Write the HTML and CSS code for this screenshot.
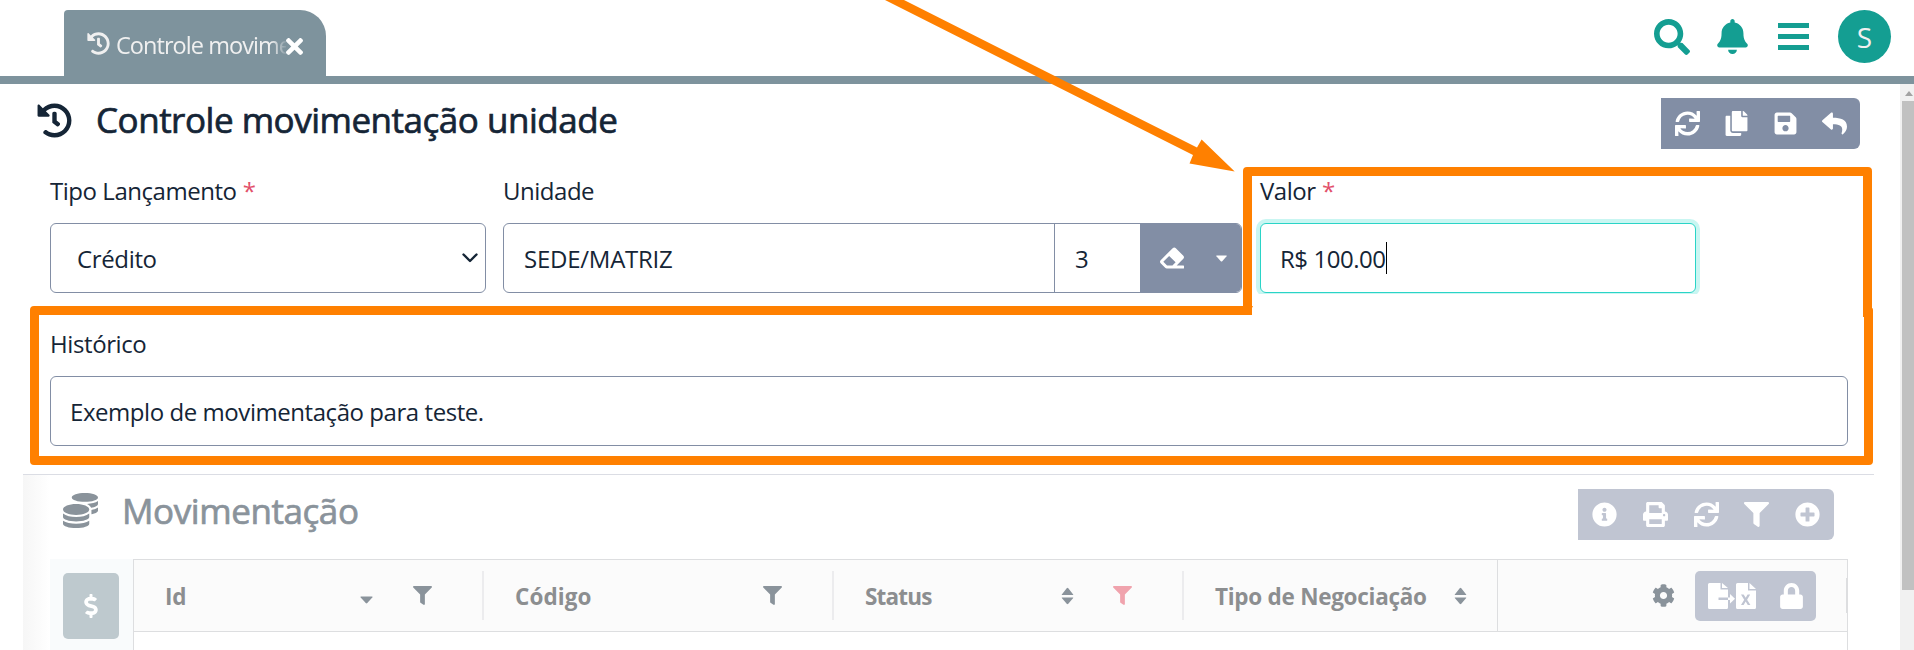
FILE: index.html
```html
<!DOCTYPE html>
<html lang="pt-BR">
<head>
<meta charset="utf-8">
<title>Controle movimentação unidade</title>
<link rel="stylesheet" href="styles.css">
</head>
<body>
<svg class="defs" width="0" height="0">
  <symbol id="history" viewBox="0 0 512 512"><path d="M504 255.531c.253 136.64-111.18 248.372-247.82 248.468-59.015.042-113.223-20.53-155.822-54.911-11.077-8.94-11.905-25.541-1.839-35.607l11.267-11.267c8.609-8.609 22.353-9.551 31.891-1.984C173.062 425.135 212.781 440 256 440c101.705 0 184-82.311 184-184 0-101.705-82.311-184-184-184-48.814 0-93.149 18.969-126.068 49.932l50.754 50.754c10.08 10.08 2.941 27.314-11.313 27.314H24c-8.837 0-16-7.163-16-16V38.627c0-14.254 17.234-21.393 27.314-11.314l49.372 49.372C129.209 34.136 189.552 8 256 8c136.81 0 247.747 110.78 248 247.531zm-180.912 78.784l9.823-12.63c8.138-10.463 6.253-25.542-4.21-33.679L288 256.349V152c0-13.255-10.745-24-24-24h-16c-13.255 0-24 10.745-24 24v135.651l65.409 50.874c10.463 8.137 25.541 6.253 33.679-4.21z"/></symbol>
  <symbol id="times" viewBox="0 80 352 352"><path d="M242.72 256l100.07-100.07c12.28-12.28 12.28-32.19 0-44.48l-22.24-22.24c-12.28-12.28-32.19-12.28-44.48 0L176 189.28 75.93 89.21c-12.28-12.28-32.19-12.28-44.48 0L9.21 111.45c-12.28 12.28-12.28 32.19 0 44.48L109.28 256 9.21 356.07c-12.28 12.28-12.28 32.19 0 44.48l22.24 22.24c12.28 12.28 32.2 12.28 44.48 0L176 322.72l100.07 100.07c12.28 12.28 32.2 12.28 44.48 0l22.24-22.24c12.28-12.28 12.28-32.19 0-44.48L242.72 256z"/></symbol>
  <symbol id="search" viewBox="0 0 512 512"><path d="M505 442.7L405.3 343c-4.5-4.5-10.6-7-17-7H372c27.6-35.3 44-79.7 44-128C416 93.1 322.9 0 208 0S0 93.1 0 208s93.1 208 208 208c48.3 0 92.7-16.4 128-44v16.3c0 6.4 2.5 12.5 7 17l99.7 99.7c9.4 9.4 24.6 9.4 33.9 0l28.3-28.3c9.4-9.4 9.4-24.6.1-34zM208 336c-70.7 0-128-57.2-128-128 0-70.7 57.2-128 128-128 70.7 0 128 57.2 128 128 0 70.7-57.2 128-128 128z"/></symbol>
  <symbol id="bell" viewBox="0 0 448 512"><path d="M224 512c35.32 0 63.97-28.65 63.97-64H160.03c0 35.35 28.65 64 63.97 64zm215.39-149.71c-19.32-20.76-55.47-51.99-55.47-154.29 0-77.7-54.48-139.9-127.94-155.16V32c0-17.67-14.32-32-31.98-32s-31.98 14.33-31.98 32v20.84C118.56 68.1 64.08 130.3 64.08 208c0 102.3-36.15 133.53-55.47 154.29-6 6.45-8.66 14.16-8.61 21.71.11 16.4 12.98 32 32.1 32h383.8c19.12 0 32-15.6 32.1-32 .05-7.55-2.61-15.27-8.61-21.71z"/></symbol>
  <symbol id="bars" viewBox="0 0 31 27"><path d="M0 0h31v5H0zM0 11h31v5H0zM0 22h31v5H0z"/></symbol>
  <symbol id="sync" viewBox="0 0 512 512"><path d="M440.65 12.57l4 82.77A247.16 247.16 0 0 0 255.83 8C134.73 8 33.91 94.92 12.29 209.82A12 12 0 0 0 24.09 224h49.05a12 12 0 0 0 11.67-9.26 175.91 175.91 0 0 1 317-56.94l-101.46-4.86a12 12 0 0 0-12.57 12v47.41a12 12 0 0 0 12 12H500a12 12 0 0 0 12-12V12a12 12 0 0 0-12-12h-47.37a12 12 0 0 0-11.98 12.57zM255.83 432a175.61 175.61 0 0 1-146-77.8l101.8 4.87a12 12 0 0 0 12.57-12v-47.4a12 12 0 0 0-12-12H12a12 12 0 0 0-12 12V500a12 12 0 0 0 12 12h47.35a12 12 0 0 0 12-12.6l-4.15-82.57A247.17 247.17 0 0 0 255.83 504c121.11 0 221.93-86.92 243.55-201.82a12 12 0 0 0-11.8-14.18h-49.05a12 12 0 0 0-11.67 9.26A175.86 175.86 0 0 1 255.83 432z"/></symbol>
  <symbol id="copy" viewBox="0 0 448 512"><path d="M320 448v40c0 13.255-10.745 24-24 24H24c-13.255 0-24-10.745-24-24V120c0-13.255 10.745-24 24-24h72v296c0 30.879 25.121 56 56 56h168zm0-344V0H152c-13.255 0-24 10.745-24 24v368c0 13.255 10.745 24 24 24h272c13.255 0 24-10.745 24-24V128H344c-13.2 0-24-10.8-24-24zm120.971-31.029L375.029 7.029A24 24 0 0 0 358.059 0H352v96h96v-6.059a24 24 0 0 0-7.029-16.97z"/></symbol>
  <symbol id="save" viewBox="0 0 448 512"><path d="M433.941 129.941l-83.882-83.882A48 48 0 0 0 316.118 32H48C21.49 32 0 53.49 0 80v352c0 26.51 21.49 48 48 48h352c26.51 0 48-21.49 48-48V163.882a48 48 0 0 0-14.059-33.941zM224 416c-35.346 0-64-28.654-64-64 0-35.346 28.654-64 64-64s64 28.654 64 64c0 35.346-28.654 64-64 64zm96-304.52V212c0 6.627-5.373 12-12 12H76c-6.627 0-12-5.373-12-12V108c0-6.627 5.373-12 12-12h228.52c3.183 0 6.235 1.264 8.485 3.515l3.48 3.48A11.996 11.996 0 0 1 320 111.48z"/></symbol>
  <symbol id="reply" viewBox="0 0 512 512"><path d="M8.309 189.836L184.313 37.851C199.719 24.546 224 35.347 224 56.015v80.053c160.629 1.839 288 34.032 288 186.258 0 61.441-39.581 122.309-83.333 154.132-13.653 9.931-33.111-2.533-28.077-18.631 45.344-145.012-21.507-183.51-176.59-185.742V360c0 20.7-24.3 31.453-39.687 18.164l-176.004-152c-11.071-9.562-11.086-26.753 0-36.328z"/></symbol>
  <symbol id="eraser" viewBox="0 0 512 512"><path d="M497.941 273.941c18.745-18.745 18.745-49.137 0-67.882l-160-160c-18.745-18.745-49.136-18.746-67.883 0l-256 256c-18.745 18.745-18.745 49.137 0 67.882l96 96A48.004 48.004 0 0 0 144 480h356c6.627 0 12-5.373 12-12v-40c0-6.627-5.373-12-12-12H355.883l142.058-142.059zm-302.627-62.627l137.373 137.373L265.373 416H150.628l-80-80 124.686-124.686z"/></symbol>
  <symbol id="filter" viewBox="0 0 512 512"><path d="M487.976 0H24.028C2.71 0-8.047 25.866 7.058 40.971L192 225.941V432c0 7.831 3.821 15.17 10.237 19.662l80 55.98C298.02 518.69 320 507.493 320 487.98V225.941l184.947-184.97C520.021 25.896 509.338 0 487.976 0z"/></symbol>
  <symbol id="info" viewBox="0 0 512 512"><path d="M256 8C119.043 8 8 119.083 8 256c0 136.997 111.043 248 248 248s248-111.003 248-248C504 119.083 392.957 8 256 8zm0 110c23.196 0 42 18.804 42 42s-18.804 42-42 42-42-18.804-42-42 18.804-42 42-42zm56 254c0 6.627-5.373 12-12 12h-88c-6.627 0-12-5.373-12-12v-24c0-6.627 5.373-12 12-12h12v-64h-12c-6.627 0-12-5.373-12-12v-24c0-6.627 5.373-12 12-12h64c6.627 0 12 5.373 12 12v100h12c6.627 0 12 5.373 12 12v24z"/></symbol>
  <symbol id="print" viewBox="0 0 512 512"><path d="M448 192V77.25c0-8.49-3.37-16.62-9.37-22.63L393.37 9.37c-6-6-14.14-9.37-22.63-9.37H96C78.33 0 64 14.33 64 32v160c-35.35 0-64 28.65-64 64v112c0 8.84 7.16 16 16 16h48v96c0 17.67 14.33 32 32 32h320c17.67 0 32-14.33 32-32v-96h48c8.84 0 16-7.16 16-16V256c0-35.35-28.65-64-64-64zm-64 256H128v-96h256v96zm0-224H128V64h192v48c0 8.84 7.16 16 16 16h48v96zm48 72c-13.25 0-24-10.75-24-24 0-13.26 10.75-24 24-24s24 10.74 24 24c0 13.25-10.75 24-24 24z"/></symbol>
  <symbol id="plus" viewBox="0 0 512 512"><path d="M256 8C119 8 8 119 8 256s111 248 248 248 248-111 248-248S393 8 256 8zm144 276c0 6.600-5.400 12-12 12h-92v92c0 6.600-5.400 12-12 12h-56c-6.600 0-12-5.400-12-12v-92h-92c-6.600 0-12-5.400-12-12v-56c0-6.600 5.400-12 12-12h92v-92c0-6.600 5.400-12 12-12h56c6.600 0 12 5.400 12 12v92h92c6.600 0 12 5.400 12 12v56z"/></symbol>
  <symbol id="lock" viewBox="0 0 448 512"><path d="M400 224h-24v-72C376 68.200 307.800 0 224 0S72 68.200 72 152v72H48c-26.500 0-48 21.500-48 48v192c0 26.500 21.500 48 48 48h352c26.500 0 48-21.500 48-48V272c0-26.500-21.500-48-48-48zm-104 0H152v-72c0-39.700 32.300-72 72-72s72 32.300 72 72v72z"/></symbol>
  <symbol id="cog" viewBox="0 0 512 512"><path d="M487.4 315.7l-42.6-24.6c4.3-23.2 4.3-47 0-70.2l42.6-24.6c4.9-2.8 7.1-8.6 5.5-14-11.1-35.6-30-67.8-54.7-94.6-3.8-4.1-10-5.1-14.8-2.3L380.8 110c-17.9-15.4-38.5-27.3-60.8-35.1V25.8c0-5.6-3.900-10.500-9.400-11.700-36.700-8.200-74.300-7.800-109.200 0-5.500 1.200-9.400 6.100-9.400 11.700V75c-22.200 7.900-42.800 19.800-60.800 35.100L88.700 85.500c-4.900-2.800-11-1.900-14.800 2.300-24.700 26.700-43.600 58.900-54.700 94.600-1.700 5.400.6 11.200 5.500 14L67.300 221c-4.300 23.200-4.300 47 0 70.200l-42.600 24.600c-4.900 2.800-7.100 8.600-5.500 14 11.100 35.600 30 67.800 54.700 94.600 3.800 4.100 10 5.100 14.800 2.300l42.600-24.600c17.900 15.400 38.500 27.300 60.800 35.100v49.200c0 5.600 3.900 10.500 9.400 11.700 36.700 8.200 74.300 7.800 109.200 0 5.500-1.200 9.400-6.100 9.400-11.700v-49.200c22.200-7.900 42.800-19.800 60.800-35.100l42.600 24.600c4.900 2.800 11 1.900 14.800-2.300 24.700-26.700 43.600-58.900 54.700-94.600 1.500-5.500-.7-11.300-5.600-14.100zM256 336c-44.100 0-80-35.900-80-80s35.900-80 80-80 80 35.900 80 80-35.900 80-80 80z"/></symbol>
  <symbol id="coins" viewBox="0 0 512 512"><path d="M0 405.3V448c0 35.3 86 64 192 64s192-28.7 192-64v-42.7C342.7 434.4 267.2 448 192 448S41.3 434.4 0 405.3zM320 128c106 0 192-28.7 192-64S426 0 320 0 128 28.7 128 64s86 64 192 64zM0 300.4V352c0 35.3 86 64 192 64s192-28.7 192-64v-51.6c-41.3 34-116.9 51.6-192 51.6S41.3 334.4 0 300.4zm416 11c57.3-11.1 96-31.7 96-55.4v-42.7c-23.2 16.4-57.3 27.6-96 34.5v63.6zM192 160C86 160 0 195.8 0 240s86 80 192 80 192-35.800 192-80-86-80-192-80zm219.300 56.300c60-10.800 100.700-32 100.700-56.300v-42.700c-35.500 25.100-96.500 38.600-160.700 41.800 29.500 14.300 51.200 33.500 60 57.200z"/></symbol>
  <symbol id="dollar" viewBox="0 0 288 512"><path d="M209.2 233.4l-108-31.6C88.700 198.200 80 186.500 80 173.500c0-16.300 13.200-29.500 29.500-29.500h66.300c12.200 0 24.200 3.700 34.200 10.500 6.100 4.100 14.300 3.100 19.500-2l34.800-34c7.100-6.900 6.100-18.400-1.800-24.500C238 74.800 207.400 64.100 176 64V16c0-8.800-7.200-16-16-16h-32c-8.800 0-16 7.200-16 16v48h-2.500C45.800 64-5.400 118.700.5 183.600c4.200 46.100 39.400 83.600 83.800 96.600l102.500 30c12.500 3.700 21.200 15.300 21.200 28.300 0 16.300-13.200 29.500-29.500 29.500h-66.300C100 368 88 364.300 78 357.500c-6.100-4.100-14.300-3.100-19.500 2l-34.800 34c-7.100 6.900-6.100 18.400 1.800 24.500 24.500 19.200 55.100 29.900 86.500 30v48c0 8.800 7.200 16 16 16h32c8.800 0 16-7.200 16-16v-48.200c46.600-.9 90.300-28.600 105.700-72.700 21.500-61.600-14.600-124.800-72.500-141.700z"/></symbol>
  <symbol id="sort" viewBox="0 0 13 18"><path d="M0.800 7.500L5.700 1.200Q6.500 .3 7.300 1.200L12.200 7.500Q12.500 8 12 8H1Q.5 8 .8 7.500zM.8 11L5.700 16.800Q6.500 17.700 7.300 16.800L12.200 11Q12.500 10.500 12 10.500H1Q.5 10.500 .8 11z"/></symbol>
  <symbol id="caret" viewBox="0 0 13 8"><path d="M1 .5H12Q13 .5 12.300 1.400L7.300 7Q6.500 7.800 5.700 7L.7 1.400Q0 .5 1 .5z"/></symbol>
  <symbol id="export" viewBox="0 0 48 26"><path fill-rule="evenodd" d="M1.500 0H12.500V6.500H20V14.500H10.500V17H20V24.500Q20 26 18.500 26H1.500Q0 26 0 24.500V1.500Q0 0 1.500 0zM14 0L20 5H14zM20 14.500H22V11L27 15.700L22 20.500V17H20zM29.500 0H40V7.500H48V24.500Q48 26 46.500 26H29.500Q28 26 28 24.500V1.500Q28 0 29.500 0zM33 11.500L36.200 16.700L33 22H35.600L37.700 18.500L39.800 22H42.400L39.100 16.700L42.200 11.500H39.600L37.700 14.800L35.600 11.500zM41.500 0L48 6H41.500z"/></symbol>
</svg>

<header class="topbar">
  <div class="tab">
    <svg class="tab-icon"><use href="#history"/></svg>
    <span class="tab-text">Controle movime</span>
    <svg class="tab-close"><use href="#times"/></svg>
  </div>
  <nav class="user-nav">
    <svg class="nav-search"><use href="#search"/></svg>
    <svg class="nav-bell"><use href="#bell"/></svg>
    <svg class="nav-bars"><use href="#bars"/></svg>
    <div class="avatar">S</div>
  </nav>
</header>

<div class="page">
  <main class="content">
    <div class="title-row">
      <svg class="title-icon"><use href="#history"/></svg>
      <h1 class="title">Controle movimentação unidade</h1>
      <div class="toolbar toolbar-main">
        <svg class="ic"><use href="#sync"/></svg>
        <svg class="ic"><use href="#copy"/></svg>
        <svg class="ic"><use href="#save"/></svg>
        <svg class="ic"><use href="#reply"/></svg>
      </div>
    </div>

    <form class="form">
      <div class="field field-type">
        <label class="label"><span class="label-type">Tipo Lançamento</span> <span class="required">*</span></label>
        <div class="control select"><span class="credit">Crédito</span>
          <svg class="chevron" viewBox="0 0 16 10"><path d="M1.500 1.500L8 8L14.500 1.500"/></svg>
        </div>
      </div>
      <div class="field field-unit">
        <label class="label"><span class="label-unit">Unidade</span></label>
        <div class="control group">
          <div class="unit-name"><span class="sede">SEDE/MATRIZ</span></div>
          <div class="unit-code">3</div>
          <div class="unit-actions">
            <svg class="ic-eraser"><use href="#eraser"/></svg>
            <svg class="ic-caret"><use href="#caret"/></svg>
          </div>
        </div>
      </div>
      <div class="field field-value">
        <label class="label"><span class="label-value">Valor</span> <span class="required">*</span></label>
        <div class="focus-clip"><div class="control focused"><span class="amount">R$ 100.00</span><i class="cursor"></i></div></div>
      </div>
      <div class="field field-history">
        <label class="label"><span class="label-history">Histórico</span></label>
        <div class="control"><span class="example">Exemplo de movimentação para teste.</span></div>
      </div>
    </form>

    <section class="movement">
      <div class="movement-head">
        <svg class="coins"><use href="#coins"/></svg>
        <h2 class="subtitle">Movimentação</h2>
        <div class="toolbar toolbar-sub">
          <svg class="ic"><use href="#info"/></svg>
          <svg class="ic"><use href="#print"/></svg>
          <svg class="ic"><use href="#sync"/></svg>
          <svg class="ic"><use href="#filter"/></svg>
          <svg class="ic"><use href="#plus"/></svg>
        </div>
      </div>
      <div class="grid">
        <aside class="side"><div class="money"><svg class="ic-dollar"><use href="#dollar"/></svg></div></aside>
        <div class="table">
          <div class="thead">
            <div class="th"><span class="th-id">Id</span><svg class="ic-down"><use href="#caret"/></svg><svg class="ic-filter"><use href="#filter"/></svg></div>
            <div class="th"><span class="th-code">Código</span><svg class="ic-filter"><use href="#filter"/></svg></div>
            <div class="th"><span class="th-status">Status</span><svg class="ic-sort"><use href="#sort"/></svg><svg class="ic-filter active"><use href="#filter"/></svg></div>
            <div class="th th-last"><span class="th-type">Tipo de Negociação</span><svg class="ic-sort"><use href="#sort"/></svg></div>
            <div class="th-actions">
              <svg class="ic-cog"><use href="#cog"/></svg>
              <div class="actions"><svg class="ic-export"><use href="#export"/></svg><svg class="ic-lock"><use href="#lock"/></svg></div>
              <i class="tick"></i>
            </div>
          </div>
        </div>
      </div>
    </section>
  </main>
  <div class="scrollbar"><svg class="scroll-up" viewBox="0 0 8 5"><path d="M0 5L4 0L8 5z"/></svg><div class="thumb"></div></div>
</div>

<!-- Callout drawn over the form -->
<svg class="callout" viewBox="0 0 1914 650">
  <path d="M885 0H904L1197 147.500L1201.600 139.500L1234.700 171.500L1189.500 163.500L1193 155z"/>
  <path fill-rule="evenodd" d="M1247 167H1868Q1872 167 1872 171V308Q1873 308 1873 310V461Q1873 465 1869 465H34Q30 465 30 461V310Q30 306 34 306H1243V171Q1243 167 1247 167zM1252 176V306H1253L1252 308V315H39V456H1864V317H1863V176z"/>
</svg>
</body>
</html>
```

FILE: styles.css
```css
* { box-sizing: border-box; }
body {
  margin: 0;
  width: 1914px;
  height: 650px;
  overflow: hidden;
  position: relative;
  background: #fff;
  color: #152536;
  font-family: "Open Sans", "Noto Sans", sans-serif;
  font-size: 24px;
  line-height: 34px;
}
svg { display: block; flex: none; fill: currentColor; }
h1, h2 { margin: 0; white-space: nowrap; }
span { white-space: nowrap; }
.defs { position: absolute; }

/* Top bar */
.topbar {
  height: 84px;
  border-bottom: 8px solid #7e939d;
  display: flex;
  justify-content: space-between;
  padding: 10px 23px 0 64px;
}
.tab {
  width: 262px;
  height: 66px;
  background: #7e939d;
  color: #f0f0f0;
  border-radius: 4px 26px 0 0;
  display: flex;
  align-items: center;
  padding: 2px 0 0 23px;
}
.tab-icon { width: 23px; height: 23px; margin: 0 6px 2px 0; }
.tab-text {
  width: 170px;
  padding-top: 2px;
  font-size: 23.5px;
  letter-spacing: -0.95px;
  -webkit-mask-image: linear-gradient(90deg, #000 155px, transparent 172px);
  mask-image: linear-gradient(90deg, #000 155px, transparent 172px);
}
.tab-close { width: 17px; height: 17px; margin: 4px 0 0 0; color: #fff; }
.user-nav { display: flex; color: #149e92; }
.nav-search { width: 36px; height: 36px; margin: 9px 27px 0 0; }
.nav-bell { width: 31px; height: 35px; margin: 9px 30px 0 0; }
.nav-bars { width: 31px; height: 27px; margin: 13px 29px 0 0; }
.avatar {
  width: 53px;
  height: 53px;
  border-radius: 50%;
  background: #149e92;
  color: #f0f0f0;
  font-size: 28px;
  line-height: 55px;
  text-align: center;
}

/* Page */
.page { display: flex; height: 566px; }
.content { width: 1900px; padding: 14px 26px 0 23px; }
.title-row { display: flex; height: 51px; padding: 0 14px 0 14px; }
.title-icon { width: 35px; height: 35px; margin: 5px 24px 0 0; }
.title { font-size: 35px; line-height: 44px; font-weight: 500; letter-spacing: -0.48px; -webkit-text-stroke: 0.7px currentColor; }
.toolbar {
  height: 51px;
  margin-left: auto;
  border-radius: 0 6px 6px 0;
  display: flex;
  align-items: center;
  justify-content: space-between;
  color: #fff;
}
.toolbar-main { width: 199px; padding: 0 13px 0 14px; background: #828ea5; }
.toolbar-sub { width: 256px; padding: 0 14px; background: #c0c5d2; }
.ic { width: 25px; height: 25px; }

/* Form */
.form { display: flex; flex-wrap: wrap; padding: 25px 0 0 27px; }
.label { display: block; height: 34px; margin-bottom: 15px; }
.required { color: #e2506a; }
.control {
  height: 70px;
  border: 1px solid #828ea5;
  border-radius: 6px;
  display: flex;
  align-items: center;
  padding: 0 19px;
  background: #fff;
}
.field-type { width: 436px; margin-right: 17px; }
.field-unit { width: 739px; margin-right: 18px; }
.field-value { width: 436px; }
.field-history { width: 1798px; margin-top: 34px; }
.select { padding: 0 7px 0 26px; justify-content: space-between; }
.chevron { width: 16px; height: 10px; fill: none; stroke: #152536; stroke-width: 2.4; stroke-linecap: round; stroke-linejoin: round; }
.group { padding: 0; overflow: hidden; align-items: stretch; line-height: 70px; }
.unit-name { width: 551px; padding-left: 20px; border-right: 1px solid #828ea5; }
.unit-code { width: 85px; padding-left: 20px; }
.unit-actions { flex: 1; background: #828ea5; color: #fff; display: flex; align-items: center; padding-left: 20px; }
.ic-eraser { width: 24px; height: 24px; margin-right: 31px; }
.ic-caret { width: 13px; height: 7px; }
.focus-clip { margin: -4px; padding: 4px; height: 75px; overflow: hidden; }
.focused { border-color: #2ad4c7; box-shadow: 0 0 0 4px #c9f6f2; }
.cursor { width: 1px; height: 32px; background: #000; }

.label-type { letter-spacing: -0.46px; }
.label-unit { letter-spacing: -0.48px; }
.label-value { letter-spacing: -0.45px; }
.label-history { letter-spacing: -0.4px; }
.credit { letter-spacing: -0.35px; padding-top: 2px; }
.sede { letter-spacing: -0.25px; }
.amount { letter-spacing: -0.45px; padding-top: 2px; }
.example { letter-spacing: -0.44px; padding-top: 2px; }

/* Movement section */
.movement {
  margin-top: 28px;
  height: 176px;
  border-top: 1px solid #dbdde4;
  padding: 14px 26px 0 27px;
  background: linear-gradient(90deg, #f6f6f6 0, #fff 27px);
}
.movement-head { display: flex; height: 70px; padding: 0 14px 0 13px; color: #8a939b; }
.coins { width: 35px; height: 35px; margin: 4px 24px 0 0; }
.subtitle { font-size: 35px; line-height: 43px; font-weight: 500; letter-spacing: -0.42px; -webkit-text-stroke: 0.7px currentColor; }
.grid { display: flex; height: 91px; }
.side { width: 83px; background: #f9fbfc; padding: 14px 13px; }
.money {
  width: 56px;
  height: 66px;
  border-radius: 5px;
  background: #bec9ce;
  color: #fff;
  display: flex;
  align-items: center;
  justify-content: center;
}
.ic-dollar { width: 14px; height: 24px; }
.table { width: 1715px; border: 1px solid #dddee0; border-bottom: 0; }
.thead {
  display: flex;
  height: 72px;
  background: #fbfbfb;
  border-bottom: 1px solid #dddee0;
  align-items: center;
  color: #8a939b;
  font-size: 22.5px;
  font-weight: 700;
}
.th { width: 350px; height: 49px; display: flex; align-items: center; padding: 2px 50px 0 31px; border-right: 2px solid #ececee; }
.th span { margin-right: auto; padding-top: 1px; color: #8c8e90; }
.th-last { width: 314px; height: 71px; padding: 2px 30px 0 31px; border-right: 1px solid #dddee0; }
.ic-filter { width: 19px; height: 19px; margin-bottom: 2px; }
.ic-down { width: 13px; height: 8px; margin: 6px 40px 0 0; }
.ic-sort { width: 13px; height: 18px; margin-bottom: 2px; }
.th .ic-sort + .ic-filter { margin-left: 39px; }
.active { color: #f0a3ad; }
.th-id { letter-spacing: -0.2px; }
.th-code { letter-spacing: 0.1px; }
.th-status { letter-spacing: -0.8px; }
.th-type { letter-spacing: -0.27px; }
.th-actions { flex: 1; display: flex; align-items: center; }
.ic-cog { width: 23px; height: 23px; margin-left: 154px; }
.actions {
  width: 121px;
  height: 50px;
  margin-left: 20px;
  border-radius: 5px;
  background: #c0c5d2;
  color: #fff;
  display: flex;
  align-items: center;
  padding: 0 13px;
  justify-content: space-between;
}
.ic-export { width: 48px; height: 26px; }
.ic-lock { width: 23px; height: 26px; }
.tick { width: 1px; height: 35px; margin-left: auto; background: #dddee0; }

/* Scrollbar */
.scrollbar { width: 14px; background: #f1f1f1; }
.scroll-up { width: 8px; height: 5px; margin: 7px 0 5px 5px; fill: #a3a3a3; }
.thumb { width: 12px; height: 489px; margin-left: 2px; background: #c1c1c1; }

.callout { position: absolute; left: 0; top: 0; width: 1914px; height: 650px; fill: #ff8000; }
```
